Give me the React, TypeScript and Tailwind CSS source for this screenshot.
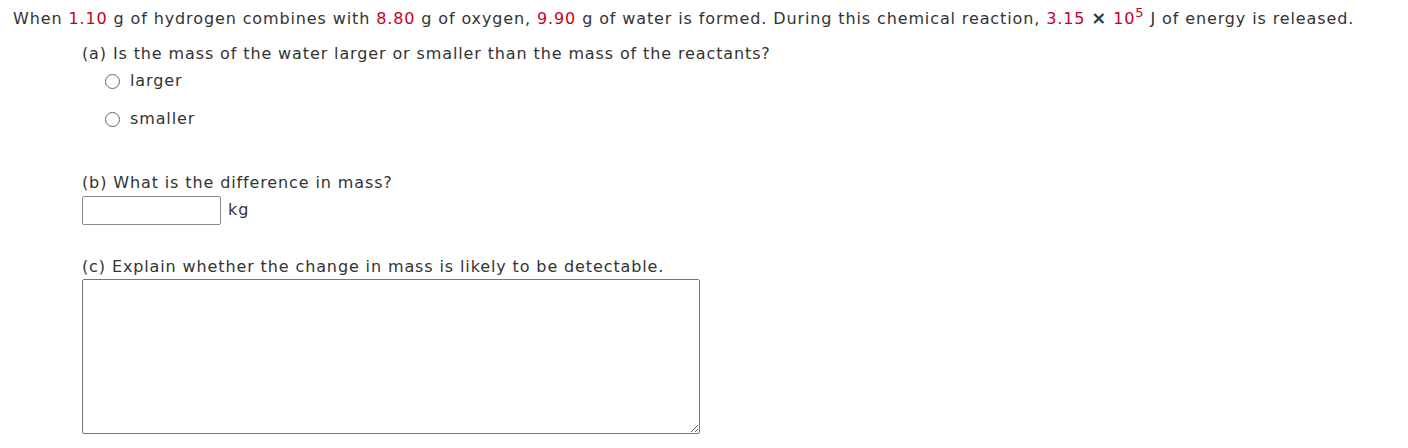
export default function App() {
  return (
    <div className="w-[1408px] h-[448px] bg-white text-[#333] text-[16px] tracking-[0.88px] font-['Verdana','DejaVu_Sans',sans-serif] overflow-hidden">
      <p className="pl-[13px] pt-[7px] h-[31px] leading-[24px] whitespace-nowrap">
        When <span className="text-[#c8001e]">1.10</span> g of hydrogen combines with{' '}
        <span className="text-[#c8001e]">8.80</span> g of oxygen, <span className="text-[#c8001e]">9.90</span> g of
        water is formed. During this chemical reaction, <span className="text-[#c8001e]">3.15</span>{' '}
        <span className="font-bold text-[18px] leading-none">×</span>{' '}
        <span className="text-[#c8001e]">
          10<sup className="text-[13px] leading-none relative -top-[7px]">5</sup>
        </span>{' '}
        J of energy is released.
      </p>

      <div className="pl-[82px]">
        {/* part a */}
        <p className="mt-[11px] leading-[24px]">(a) Is the mass of the water larger or smaller than the mass of the reactants?</p>
        <div className="pl-[23px] flex flex-col gap-[14px] mt-[3px]">
          <label className="flex items-center gap-[10px] leading-[24px]">
            <span className="w-[15px] h-[15px] rounded-full border border-[#666] bg-white" />
            larger
          </label>
          <label className="flex items-center gap-[10px] leading-[24px]">
            <span className="w-[15px] h-[15px] rounded-full border border-[#666] bg-white" />
            smaller
          </label>
        </div>

        {/* part b */}
        <p className="mt-[40px] leading-[24px]">(b) What is the difference in mass?</p>
        <div className="flex items-center gap-[7px] mt-[1px]">
          <div className="w-[139px] h-[29px] border border-[#8a8a8a] rounded-[2px] bg-white" />
          <span className="leading-[24px] -mt-[1px]">kg</span>
        </div>

        {/* part c */}
        <p className="mt-[30px] leading-[24px]">(c) Explain whether the change in mass is likely to be detectable.</p>
        <textarea className="block mt-0 w-[618px] h-[155px] border border-[#767676] rounded-[2px] bg-white resize" />
      </div>
    </div>
  );
}
